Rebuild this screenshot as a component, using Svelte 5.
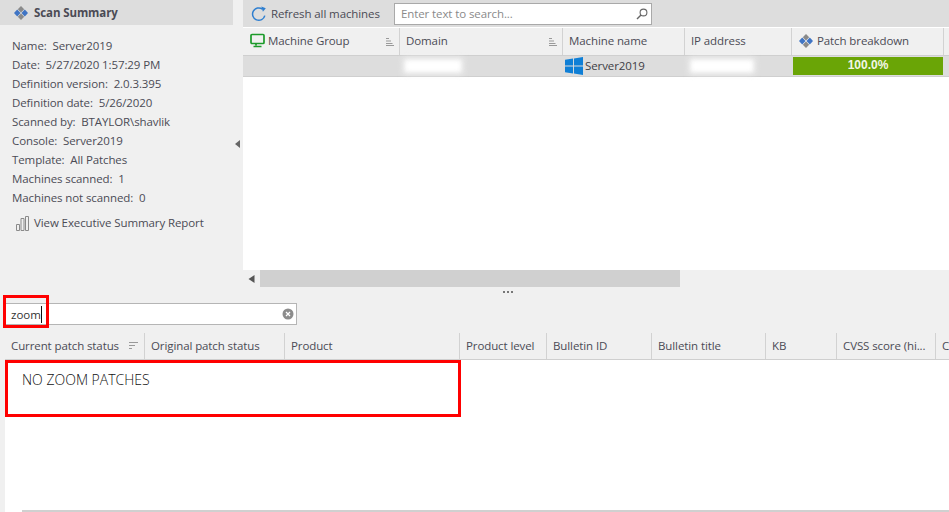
<script lang="ts">
	const summary = [
		['Name:', 'Server2019'],
		['Date:', '5/27/2020 1:57:29 PM'],
		['Definition version:', '2.0.3.395'],
		['Definition date:', '5/26/2020'],
		['Scanned by:', 'BTAYLOR\\shavlik'],
		['Console:', 'Server2019'],
		['Template:', 'All Patches'],
		['Machines scanned:', '1'],
		['Machines not scanned:', '0']
	];

	const patchColumns = [
		{ label: 'Current patch status', width: 140, sort: true },
		{ label: 'Original patch status', width: 140 },
		{ label: 'Product', width: 175 },
		{ label: 'Product level', width: 87 },
		{ label: 'Bulletin ID', width: 105 },
		{ label: 'Bulletin title', width: 114 },
		{ label: 'KB', width: 71 },
		{ label: 'CVSS score (hi...', width: 99 },
		{ label: 'C', width: 14 }
	];
</script>

{#snippet diamond()}
	<svg class="diamond" width="14" height="14" viewBox="0 0 14 14">
		<path d="M7 0l3.200 3.200L7 6.400 3.800 3.200z" fill="#8a8a8a" />
		<path d="M7 7.600l3.200 3.200L7 14l-3.200-3.200z" fill="#8a8a8a" />
		<path d="M3.200 3.600L6.500 7 3.200 10.400 0 7z" fill="#3f74c4" />
		<path d="M10.800 3.600L14 7l-3.200 3.400L7.500 7z" fill="#3f74c4" />
	</svg>
{/snippet}

{#snippet sortLines()}
	<svg class="sort" width="8" height="8" viewBox="0 0 8 8">
		<path d="M0 .5h3M0 3h5M0 5.500h6.500M0 7.500h8" stroke="#999" fill="none" />
	</svg>
{/snippet}

<div class="page">
	<section class="top">
		<aside class="summary">
			<header class="summary-head">
				{@render diamond()}
				<strong>Scan Summary</strong>
			</header>
			<ul>
				{#each summary as [key, value]}
					<li>{key}&nbsp; {value}</li>
				{/each}
			</ul>
			<div class="report">
				<svg width="15" height="16" viewBox="0 0 15 16">
					<path d="M1.500 9.500h3v6h-3zM6 3.500h3v12H6zM10.500 1.500h3v14h-3z" fill="none" stroke="#8a8a8a" />
				</svg>
				View Executive Summary Report
			</div>
			<svg class="collapse" width="5" height="8" viewBox="0 0 5 8"><path d="M5 0v8L0 4z" fill="#666" /></svg>
		</aside>

		<div class="machines">
			<div class="toolbar">
				<svg class="refresh" width="16" height="16" viewBox="0 0 16 16">
					<path d="M13.800 9.600A6.200 6.200 0 1 1 11.400 3.100" fill="none" stroke="#2f7fd0" stroke-width="1.500" />
					<path d="M10.300 0.600l4.500 1.600-2.900 3.600z" fill="#2f7fd0" />
				</svg>
				<span class="refresh-label">Refresh all machines</span>
				<div class="search">
					<span>Enter text to search...</span>
					<svg width="12" height="12" viewBox="0 0 12 12">
						<circle cx="7.500" cy="4.500" r="3.400" fill="none" stroke="#666" stroke-width="1.100" />
						<path d="M5 7L1 11" stroke="#666" stroke-width="1.400" />
					</svg>
				</div>
			</div>

			<div class="machine-grid heads">
				<div class="head">
					<svg width="15" height="15" viewBox="0 0 15 15">
						<rect x="1" y="1.500" width="13" height="9" rx="1" fill="none" stroke="#1c9a2a" stroke-width="1.700" />
						<path d="M6 11v1.500M3.500 13.500h8" stroke="#1c9a2a" stroke-width="1.700" />
					</svg>
					<span class="grow">Machine Group</span>
					{@render sortLines()}
				</div>
				<div class="head"><span class="grow">Domain</span>{@render sortLines()}</div>
				<div class="head">Machine name</div>
				<div class="head">IP address</div>
				<div class="head patch-head">{@render diamond()}Patch breakdown</div>
				<div class="head last"></div>
			</div>

			<div class="machine-grid row">
				<div></div>
				<div class="cell"><span class="redacted"></span></div>
				<div class="cell name">
					<svg width="18" height="18" viewBox="0 0 19 19">
						<path d="M0 3l8.500-1.300v7.300H0zM9.500 1.500L19 0v9H9.500zM0 10h8.500v7.300L0 16zM9.500 10H19v9l-9.500-1.500z" fill="#0f7fd6" />
					</svg>
					Server2019
				</div>
				<div class="cell"><span class="redacted short"></span></div>
				<div class="bar-cell"><div class="bar">100.0%</div></div>
				<div></div>
			</div>

			<div class="machine-body"></div>

			<div class="hscroll">
				<svg width="6" height="8" viewBox="0 0 6 8"><path d="M6 0v8L0 4z" fill="#555" /></svg>
				<div class="thumb"></div>
			</div>
		</div>
	</section>

	<div class="splitter"><i></i><i></i><i></i></div>

	<section class="filter">
		<div class="filter-box">
			<span class="typed">zoom</span>
			<svg width="12" height="12" viewBox="0 0 12 12">
				<circle cx="6" cy="6" r="5.500" fill="#8c8c8c" />
				<path d="M4 4l4 4M8 4l-4 4" stroke="#fff" stroke-width="1.300" />
			</svg>
		</div>
		<div class="mark mark-filter"></div>
	</section>

	<section class="patches">
		<div class="patch-heads">
			{#each patchColumns as col}
				<div class="patch-col" style="width: {col.width}px">
					<span class="grow">{col.label}</span>
					{#if col.sort}
						<svg width="9" height="7" viewBox="0 0 9 7"><path d="M0 .5h9M0 3.500h6M0 6.500h3" stroke="#999" fill="none" /></svg>
					{/if}
				</div>
			{/each}
		</div>
		<div class="patch-body">
			<p>NO ZOOM PATCHES</p>
			<div class="mark mark-note"></div>
			<div class="bottom-scroll"></div>
		</div>
	</section>
</div>

<style>
	:global(body) {
		margin: 0;
		background: #f0f0f0;
	}

	.page {
		width: 949px;
		height: 512px;
		overflow: hidden;
		position: relative;
		background: #f0f0f0;
		font-family: "Open Sans", "Noto Sans", sans-serif;
		font-size: 11.5px;
		letter-spacing: -0.1px;
		color: #4b4b55;
	}

	.top {
		display: flex;
		height: 287px;
	}

	.summary {
		width: 243px;
		flex: none;
		position: relative;
	}

	.summary-head {
		width: 233px;
		height: 25px;
		background: #dddddd;
		display: flex;
		align-items: center;
		gap: 6px;
		padding-left: 14px;
		box-sizing: border-box;
	}

	.summary-head strong {
		font-weight: 700;
	}

	ul {
		list-style: none;
		margin: 11px 0 0;
		padding: 0 0 0 12px;
	}

	li {
		height: 19px;
		line-height: 19px;
		white-space: nowrap;
	}

	.report {
		display: flex;
		align-items: center;
		gap: 4px;
		margin: 6px 0 0 15px;
		height: 19px;
	}

	.collapse {
		position: absolute;
		left: 235px;
		top: 140px;
	}

	.machines {
		flex: 1;
		min-width: 0;
		display: flex;
		flex-direction: column;
		background: #fff;
	}

	.toolbar {
		height: 27px;
		flex: none;
		background: #dddddd;
		display: flex;
		align-items: center;
		padding-left: 8px;
	}

	.refresh-label {
		margin-left: 4px;
		width: 123px;
		white-space: nowrap;
	}

	.search {
		width: 258px;
		height: 22px;
		box-sizing: border-box;
		background: #fff;
		border: 1px solid #a9a9a9;
		display: flex;
		align-items: center;
		justify-content: space-between;
		padding: 0 3px 0 6px;
		color: #8a8a8a;
	}

	.machine-grid {
		display: grid;
		grid-template-columns: 157px 163px 122px 107px 152px 5px;
	}

	.heads {
		height: 28px;
		flex: none;
		background: #f0f0f0;
		border-bottom: 1px solid #cfcfcf;
		box-sizing: border-box;
		margin-top: 1px;
	}

	.head {
		display: flex;
		align-items: center;
		padding: 0 5px 2px 6px;
		gap: 4px;
		border-right: 1px solid #d2d2d2;
		white-space: nowrap;
		min-width: 0;
	}

	.head:first-child {
		padding-left: 7px;
		gap: 3px;
	}

	.head.last {
		border-right: 0;
	}

	.patch-head {
		gap: 4px;
		padding-left: 7px;
	}

	.grow {
		flex: 1;
		min-width: 0;
		white-space: nowrap;
	}

	.sort {
		flex: none;
		margin-top: 3px;
	}

	.row {
		height: 21px;
		flex: none;
		background: #dddddd;
		border-bottom: 1px solid #cfcfcf;
		box-sizing: border-box;
	}

	.cell {
		display: flex;
		align-items: center;
		min-width: 0;
		padding-bottom: 2px;
	}

	.name {
		gap: 2px;
		padding-left: 2px;
		color: #3d3d45;
		white-space: nowrap;
	}

	.redacted {
		display: block;
		width: 56px;
		height: 12px;
		margin-left: 5px;
		background: #fff;
		filter: blur(2px);
		box-shadow: 0 0 5px 2px #f0f0f0;
	}

	.redacted.short {
		width: 62px;
		margin-left: 6px;
	}

	.bar-cell {
		padding: 1px 1px 2px 1px;
	}

	.bar {
		height: 18px;
		line-height: 17px;
		background: #6aa506;
		color: #f2f7e6;
		font-weight: 700;
		font-size: 12px;
		letter-spacing: 0;
		text-align: center;
		font-family: "Liberation Sans", sans-serif;
	}

	.machine-body {
		flex: 1;
		background: #fff;
	}

	.hscroll {
		height: 17px;
		flex: none;
		background: #f0f0f0;
		display: flex;
		align-items: center;
	}

	.hscroll svg {
		width: 17px;
		flex: none;
	}

	.thumb {
		width: 420px;
		height: 17px;
		background: #d0d0d0;
	}

	.splitter {
		height: 10px;
		display: flex;
		align-items: center;
		gap: 2px;
		padding: 0 0 0 503px;
	}

	.splitter i {
		width: 2px;
		height: 2px;
		background: #777;
	}

	.filter {
		height: 36px;
		padding: 6px 0 0 5px;
		box-sizing: border-box;
		position: relative;
	}

	.filter-box {
		width: 292px;
		height: 22px;
		box-sizing: border-box;
		background: #fff;
		border: 1px solid #b5b5b5;
		display: flex;
		align-items: center;
		justify-content: space-between;
		padding: 0 2px 0 5px;
	}

	.typed {
		color: #333;
		font-size: 11.5px;
		letter-spacing: 0;
		border-right: 1px solid #111;
		line-height: 17px;
	}

	.patches {
		padding-left: 5px;
	}

	.patch-heads {
		display: flex;
		height: 27px;
		box-sizing: border-box;
		border-bottom: 1px solid #cfcfcf;
		overflow: hidden;
	}

	.patch-col {
		display: flex;
		align-items: center;
		gap: 6px;
		flex: none;
		box-sizing: border-box;
		padding: 0 6px 2px;
		border-right: 1px solid #d2d2d2;
		white-space: nowrap;
	}

	.patch-body {
		height: 152px;
		background: #fff;
		position: relative;
	}

	.patch-body p {
		margin: 0;
		padding: 10px 0 0 17px;
		font-size: 14px;
		font-weight: 300;
		letter-spacing: 0;
		color: #111;
	}

	.bottom-scroll {
		position: absolute;
		left: 17px;
		right: 0;
		bottom: 0;
		height: 2px;
		background: #d0d0d0;
	}

	/* red annotations drawn over the screenshot */
	.mark {
		position: absolute;
		border: 3px solid #ff0000;
		box-sizing: border-box;
		pointer-events: none;
	}

	.mark-filter {
		left: 3px;
		top: -2px;
		width: 46px;
		height: 33px;
	}

	.mark-note {
		left: 0;
		top: 0;
		width: 456px;
		height: 57px;
	}
</style>
